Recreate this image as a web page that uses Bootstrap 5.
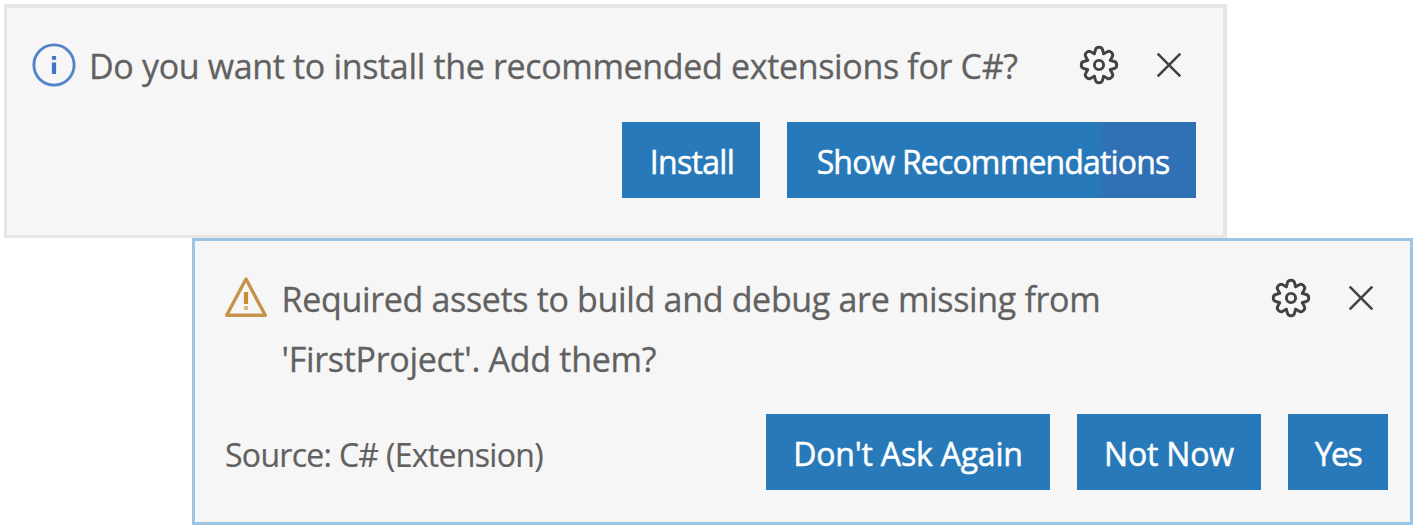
<!DOCTYPE html>
<html lang="en">
<head>
<meta charset="utf-8">
<meta name="viewport" content="width=device-width, initial-scale=1">
<title>Notifications</title>
<link href="https://cdn.jsdelivr.net/npm/bootstrap@5.3.0/dist/css/bootstrap.min.css" rel="stylesheet">
<style>
  body{font-family:"Open Sans","Noto Sans",sans-serif;color:#616161;background:#fff;overflow:hidden}
  .toast-box{background:#f6f6f6;border:4px solid #e6e6e6}
  .toast-info{width:1223px;height:234px;margin:4px 0 0 4px;padding:31px 27px 0 25px;border-left-width:3px;border-bottom-width:3px}
  .toast-warn{width:1221px;height:287px;margin-left:192px;padding:29px 22px 0 29px;border:3px solid #9cc5e3}
  .message{font-size:34px;line-height:60px;white-space:nowrap;-webkit-text-stroke:.3px}
  .toast-info .message{letter-spacing:-.34px;margin:-3px 0 2px 13px}
  .toast-warn .message{letter-spacing:-.33px;margin:-1px 0 1px 13.5px}
  .toast-warn .message span{letter-spacing:-.3px}
  .source{font-size:32px;letter-spacing:-.7px;white-space:nowrap;padding:5px 0 0 1px;-webkit-text-stroke:.2px}
  .tools{gap:34px}
  .toast-info .tools{margin:6px 11px 0 0}
  .toast-warn .tools{margin:8px 11px 0 0}
  .tools svg,.status{display:block;flex:none}
  .tools svg{stroke:#424242;fill:none}
  .actions{gap:27px}
  .btn-action{--bs-btn-color:#fff;--bs-btn-bg:#2879b9;--bs-btn-hover-color:#fff;--bs-btn-hover-bg:#226aa3;
    height:76px;padding:4px 0 0;border:0;border-radius:0;font-size:32px;line-height:72px;white-space:nowrap;-webkit-text-stroke:.5px}
  .w-install{width:138px;letter-spacing:-.7px;padding-left:2px}
  .w-show{width:409px;letter-spacing:-.85px;padding-left:3px;background:linear-gradient(90deg,#2879b9 76%,#3070b5 78%)}
  .w-never{width:284px;letter-spacing:-.2px}
  .w-later{width:184px;letter-spacing:-.2px}
  .w-yes{width:100px;letter-spacing:-1.5px}
</style>
</head>
<body>
<svg width="0" height="0" class="position-absolute" aria-hidden="true">
  <defs>
    <path id="tooth" d="M-4.7 -11.3L-3.5 -15.2Q-3 -17.7 0 -17.7Q3 -17.7 3.5 -15.2L4.7 -11.3"/>
    <g id="gear" stroke-width="2.9" stroke-linejoin="round" stroke-linecap="round">
      <use href="#tooth"/><use href="#tooth" transform="rotate(45)"/><use href="#tooth" transform="rotate(90)"/><use href="#tooth" transform="rotate(135)"/>
      <use href="#tooth" transform="rotate(180)"/><use href="#tooth" transform="rotate(225)"/><use href="#tooth" transform="rotate(270)"/><use href="#tooth" transform="rotate(315)"/>
      <circle r="4.6"/>
    </g>
    <path id="cross" stroke-width="2.6" d="M-11.3 -11.3L11.3 11.3M11.3 -11.3L-11.3 11.3"/>
  </defs>
</svg>

<section class="toast-box toast-info">
  <div class="d-flex align-items-start">
    <svg class="status mt-1" width="44" height="44" viewBox="0 0 44 44">
      <circle cx="22" cy="22" r="20.1" fill="none" stroke="#5383cb" stroke-width="2.9"/>
      <path d="M22 19.5V31M22 13V16.8" stroke="#3f75c6" stroke-width="4.2"/>
    </svg>
    <div class="message">Do you want to install the recommended extensions for C#?</div>
    <div class="tools d-flex ms-auto">
      <svg width="40" height="40" viewBox="-20 -20 40 40"><use href="#gear"/></svg>
      <svg width="32" height="40" viewBox="-16 -20 32 40"><use href="#cross"/></svg>
    </div>
  </div>
  <div class="actions d-flex justify-content-end mt-4">
    <button type="button" class="btn btn-action w-install">Install</button>
    <button type="button" class="btn btn-action w-show">Show Recommendations</button>
  </div>
</section>

<section class="toast-box toast-warn">
  <div class="d-flex align-items-start">
    <svg class="status mt-1" width="44" height="46" viewBox="0 0 44 46">
      <path d="M22 5L41.3 41.3H2.7Z" fill="none" stroke="#c5934a" stroke-width="3.4" stroke-linejoin="round"/>
      <path d="M22 18V30" stroke="#c98d35" stroke-width="4.2"/>
      <path d="M22 32V36" stroke="#d9b682" stroke-width="4.2"/>
    </svg>
    <div class="message">Required assets to build and debug are missing from<br><span>'FirstProject'. Add them?</span></div>
    <div class="tools d-flex ms-auto">
      <svg width="40" height="40" viewBox="-20 -20 40 40"><use href="#gear"/></svg>
      <svg width="32" height="40" viewBox="-16 -20 32 40"><use href="#cross"/></svg>
    </div>
  </div>
  <div class="d-flex align-items-center justify-content-between mt-4">
    <div class="source">Source: C# (Extension)</div>
    <div class="actions d-flex">
      <button type="button" class="btn btn-action w-never">Don't Ask Again</button>
      <button type="button" class="btn btn-action w-later">Not Now</button>
      <button type="button" class="btn btn-action w-yes">Yes</button>
    </div>
  </div>
</section>
<script src="https://cdn.jsdelivr.net/npm/bootstrap@5.3.0/dist/js/bootstrap.bundle.min.js"></script>
</body>
</html>
